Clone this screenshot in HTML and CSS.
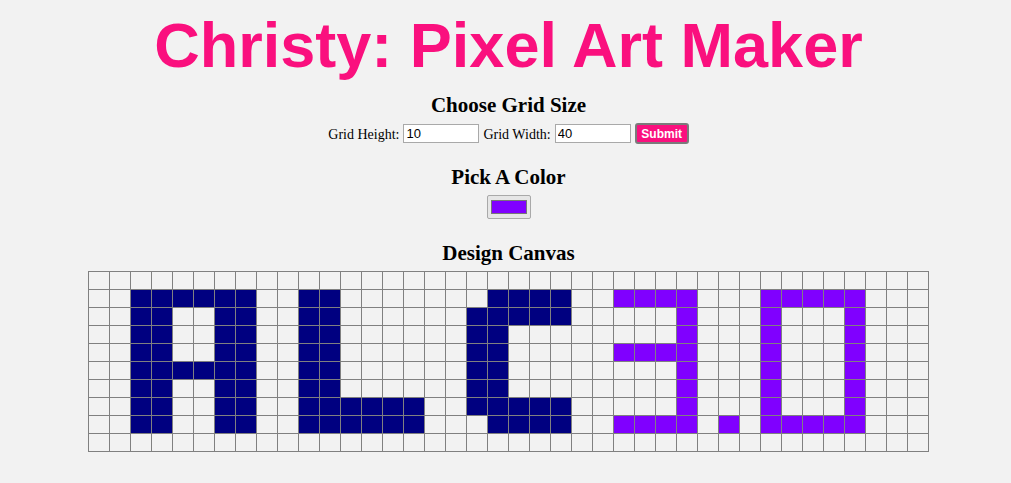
FILE: index.html
```html
<!DOCTYPE html>
<html lang="en">
<head>
<meta charset="utf-8">
<title>Christy: Pixel Art Maker</title>
<link rel="stylesheet" href="styles.css">
</head>
<body>
<h1 class="title">Christy: Pixel Art Maker</h1>

<h2 class="section-title">Choose Grid Size</h2>
<form class="size-form">
  <label class="field-label" for="inputHeight">Grid Height:</label>
  <input class="num-input" type="number" id="inputHeight" value="10">
  <label class="field-label" for="inputWidth">Grid Width:</label>
  <input class="num-input" type="number" id="inputWidth" value="40">
  <input class="submit-btn" type="button" value="Submit">
</form>

<h2 class="section-title color-title">Pick A Color</h2>
<div class="color-row"><input class="color-input" type="color" value="#8000ff"></div>

<h2 class="section-title canvas-title">Design Canvas</h2>
<table class="canvas">
<tr><td><td><td><td><td><td><td><td><td><td>
<td><td><td><td><td><td><td><td><td><td>
<td><td><td><td><td><td><td><td><td><td>
<td><td><td><td><td><td><td><td><td><td>
<tr><td><td><td class="n"><td class="n"><td class="n"><td class="n"><td class="n"><td class="n"><td><td><td class="n"><td class="n"><td><td><td><td><td><td><td><td class="n"><td class="n"><td class="n"><td class="n"><td><td><td class="p"><td class="p"><td class="p"><td class="p"><td><td><td><td class="p"><td class="p"><td class="p"><td class="p"><td class="p"><td><td><td>
<tr><td><td><td class="n"><td class="n"><td><td><td class="n"><td class="n"><td><td><td class="n"><td class="n"><td><td><td><td><td><td><td class="n"><td class="n"><td class="n"><td class="n"><td class="n"><td><td><td><td><td><td class="p"><td><td><td><td class="p"><td><td><td><td class="p"><td><td><td>
<tr><td><td><td class="n"><td class="n"><td><td><td class="n"><td class="n"><td><td><td class="n"><td class="n"><td><td><td><td><td><td><td class="n"><td class="n"><td><td><td><td><td><td><td><td><td class="p"><td><td><td><td class="p"><td><td><td><td class="p"><td><td><td>
<tr><td><td><td class="n"><td class="n"><td><td><td class="n"><td class="n"><td><td><td class="n"><td class="n"><td><td><td><td><td><td><td class="n"><td class="n"><td><td><td><td><td><td class="p"><td class="p"><td class="p"><td class="p"><td><td><td><td class="p"><td><td><td><td class="p"><td><td><td>
<tr><td><td><td class="n"><td class="n"><td class="n"><td class="n"><td class="n"><td class="n"><td><td><td class="n"><td class="n"><td><td><td><td><td><td><td class="n"><td class="n"><td><td><td><td><td><td><td><td><td class="p"><td><td><td><td class="p"><td><td><td><td class="p"><td><td><td>
<tr><td><td><td class="n"><td class="n"><td><td><td class="n"><td class="n"><td><td><td class="n"><td class="n"><td><td><td><td><td><td><td class="n"><td class="n"><td><td><td><td><td><td><td><td><td class="p"><td><td><td><td class="p"><td><td><td><td class="p"><td><td><td>
<tr><td><td><td class="n"><td class="n"><td><td><td class="n"><td class="n"><td><td><td class="n"><td class="n"><td class="n"><td class="n"><td class="n"><td class="n"><td><td><td class="n"><td class="n"><td class="n"><td class="n"><td class="n"><td><td><td><td><td><td class="p"><td><td><td><td class="p"><td><td><td><td class="p"><td><td><td>
<tr><td><td><td class="n"><td class="n"><td><td><td class="n"><td class="n"><td><td><td class="n"><td class="n"><td class="n"><td class="n"><td class="n"><td class="n"><td><td><td><td class="n"><td class="n"><td class="n"><td class="n"><td><td><td class="p"><td class="p"><td class="p"><td class="p"><td><td class="p"><td><td class="p"><td class="p"><td class="p"><td class="p"><td class="p"><td><td><td>
<tr><td><td><td><td><td><td><td><td><td><td>
<td><td><td><td><td><td><td><td><td><td>
<td><td><td><td><td><td><td><td><td><td>
<td><td><td><td><td><td><td><td><td><td>
</table>
</body>
</html>
```

FILE: styles.css
```css
html {
  background: #f2f2f2;
}

body {
  margin: 8px 8px 8px 14px;
  text-align: center;
  font-family: "Liberation Serif", "Times New Roman", serif;
  color: #000;
}

.title {
  margin: 0;
  font-family: "Liberation Sans", Arial, sans-serif;
  font-weight: bold;
  font-size: 63px;
  line-height: 74px;
  color: #fa107e;
}

.section-title {
  margin: 11px 0 0;
  font-size: 21px;
  line-height: 24px;
  font-weight: bold;
}

.size-form {
  display: flex;
  justify-content: center;
  align-items: center;
  gap: 4px;
  margin: 5px 0 0;
  height: 23px;
}

.field-label {
  font-size: 14px;
  line-height: 16px;
  padding-top: 2px;
}

.num-input {
  box-sizing: border-box;
  width: 76px;
  height: 19px;
  margin: 0;
  padding: 1px 2px;
  border: 1px solid #a9a9a9;
  background: #fff;
  font-family: "Liberation Sans", Arial, sans-serif;
  font-size: 13px;
  color: #000;
  -moz-appearance: textfield;
}

.num-input::-webkit-inner-spin-button,
.num-input::-webkit-outer-spin-button {
  -webkit-appearance: none;
  margin: 0;
}

.submit-btn {
  box-sizing: border-box;
  width: 54px;
  height: 21px;
  margin: 0;
  padding: 0;
  border: 2px solid #7b7b7b;
  border-radius: 3px;
  background: #fa107e;
  color: #fff;
  font-family: "Liberation Sans", Arial, sans-serif;
  font-weight: bold;
  font-size: 12px;
}

.color-title {
  margin-top: 20px;
}

.color-row {
  display: flex;
  justify-content: center;
  margin-top: 6px;
}

.color-input {
  -webkit-appearance: none;
  appearance: none;
  box-sizing: border-box;
  width: 44px;
  height: 24px;
  margin: 0;
  padding: 4px 3px;
  border: 1px solid #a9a9a9;
  border-radius: 2px;
  background: #e6e6e6;
}

.color-input::-webkit-color-swatch-wrapper {
  padding: 0;
}

.color-input::-webkit-color-swatch {
  border: 1px solid #777;
  border-radius: 0;
}

.canvas-title {
  margin-top: 22px;
}

.canvas {
  margin: 6px auto 0;
  border-collapse: separate;
  border-spacing: 0;
  border-top: 1px solid #808080;
  border-left: 1px solid #808080;
}

.canvas td {
  box-sizing: content-box;
  width: 20px;
  height: 17px;
  padding: 0;
  border-right: 1px solid #808080;
  border-bottom: 1px solid #808080;
}

.canvas td.n {
  background: #000080;
}

.canvas td.p {
  background: #8000ff;
}
```
